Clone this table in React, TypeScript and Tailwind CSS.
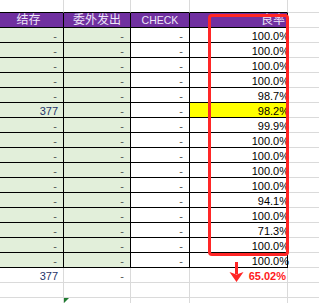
import React from 'react';

const rates = [
  '100.0%', '100.0%', '100.0%', '100.0%', '98.7%', '98.2%', '99.9%', '100.0%',
  '100.0%', '100.0%', '100.0%', '94.1%', '100.0%', '71.3%', '100.0%', '100.0%',
];

const cols = 'grid grid-cols-[64px_67px_59px_98px_31px]';
const light = 'border-[#dadada]';

function Dash({ pr = 'pr-[6px]' }: { pr?: string }) {
  return <span className={`${pr} text-[#555]`}>-</span>;
}

export default function App() {
  return (
    <div className="relative w-[319px] h-[303px] overflow-hidden bg-white font-['Liberation_Sans','Noto_Sans_CJK_SC',sans-serif] text-[11px] leading-[12px] text-black">
      {/* blank row above header */}
      <div className={`${cols} h-[13px]`}>
        <div className={`border-r border-b ${light} border-b-black`} />
        <div className={`border-r border-b ${light} border-b-black`} />
        <div className={`border-r border-b ${light} border-b-black`} />
        <div className={`border-r border-b ${light} border-b-black`} />
        <div className={`border-b ${light}`} />
      </div>

      {/* header */}
      <div className={`${cols} h-[15px] text-[#eee6f8]`}>
        <div className="bg-[#7030a0] border-r border-b border-black flex items-end justify-center pr-[6px] text-[12px] leading-[14px]">结存</div>
        <div className="bg-[#7030a0] border-r border-b border-black flex items-end justify-center text-[12px] leading-[14px]">委外发出</div>
        <div className="bg-[#7030a0] border-r border-b border-black flex items-end justify-center text-[10.5px] leading-[13px]">CHECK</div>
        <div className="bg-[#7030a0] border-r border-b border-black flex items-end justify-end pr-[2px] text-[12px] leading-[14px]">良率</div>
        <div className={`border-b ${light}`} />
      </div>

      {/* data rows */}
      {rates.map((r, i) => (
        <div key={i} className={`${cols} h-[15px]`}>
          <div className="bg-[#e2efda] border-r border-b border-black flex items-end justify-end">
            {i === 5 ? <span className="pr-[5px] text-[#1f3468]">377</span> : <Dash />}
          </div>
          <div className="bg-[#e2efda] border-r border-b border-black flex items-end justify-end">
            <Dash />
          </div>
          <div className="border-r border-b border-black flex items-end justify-end">
            <Dash />
          </div>
          <div className={`${i === 5 ? 'bg-[#ffff00]' : ''} border-r border-b border-black flex items-end justify-end`}>
            <span className="-mr-[2px]">{r}</span>
          </div>
          <div className={`border-b ${light}`} />
        </div>
      ))}

      {/* total row */}
      <div className={`${cols} h-[15px]`}>
        <div className={`border-r border-b ${light} flex items-end justify-end`}>
          <span className="pr-[5px] text-[#1f3468]">377</span>
        </div>
        <div className={`border-r border-b ${light} flex items-end justify-end`}>
          <Dash />
        </div>
        <div className={`border-r border-b ${light}`} />
        <div className={`border-r border-b ${light} flex items-end justify-end`}>
          <span className="pr-[1px] font-bold text-[#ff1a1a]">65.02%</span>
        </div>
        <div className={`border-b ${light}`} />
      </div>

      {/* empty row */}
      <div className={`${cols} h-[15px]`}>
        <div className={`border-r border-b ${light}`} />
        <div className={`border-r border-b ${light}`} />
        <div className={`border-r border-b ${light}`} />
        <div className={`border-r border-b ${light}`} />
        <div className={`border-b ${light}`} />
      </div>

      {/* partial row */}
      <div className={`${cols} h-[5px]`}>
        <div className={`border-r ${light}`} />
        <div className={`relative border-r ${light}`}>
          <svg className="absolute left-0 top-0" width="5" height="5" viewBox="0 0 5 5">
            <polygon points="0,0 5,0 0,5" fill="#1e7b30" />
          </svg>
        </div>
        <div className={`border-r ${light}`} />
        <div className={`border-r ${light}`} />
        <div />
      </div>

      {/* red highlight box */}
      <div className="absolute left-[208px] top-[14px] w-[81px] h-[242px] border-[3px] border-[#ff2626] rounded-[4px]" />

      {/* red arrow */}
      <svg className="absolute left-[229px] top-[261px]" width="15" height="22" viewBox="0 0 15 22">
        <rect x="6" y="1" width="3" height="12" fill="#ff2626" />
        <polygon points="0.5,11 7.5,13.5 14.5,11 7.5,21" fill="#ff2626" />
      </svg>
    </div>
  );
}
